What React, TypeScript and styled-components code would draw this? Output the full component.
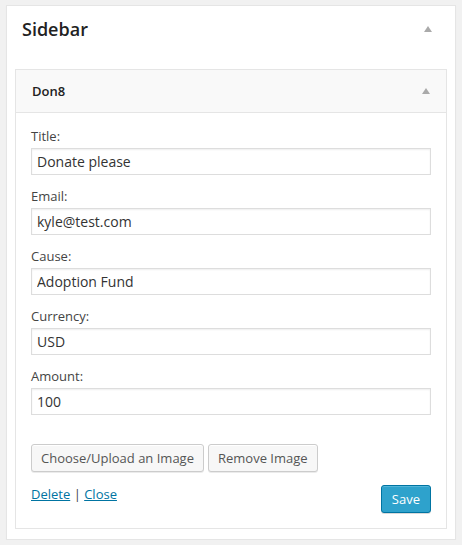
import React from "react";
import styled, { createGlobalStyle } from "styled-components";

const Global = createGlobalStyle`
  html, body { margin: 0; padding: 0; background: #f1f1f1; }
  body { font-family: "Open Sans", "Liberation Sans", sans-serif; font-size: 13px; color: #444; }
  #root { padding: 5px 0 0 6px; }
`;

const Panel = styled.div`
  box-sizing: border-box;
  width: 450px;
  background: #fff;
  border: 1px solid #e5e5e5;
  box-shadow: 0 1px 1px rgba(0, 0, 0, 0.04);
  padding: 0 8px 10px;
`;

const PanelHeader = styled.div`
  display: flex;
  align-items: center;
  justify-content: space-between;
  height: 46px;
  padding: 0 15px 0 7px;
  margin-bottom: 17px;
`;

const PanelTitle = styled.h2`
  margin: 0;
  font-size: 18px;
  font-weight: 600;
  line-height: 24px;
  color: #222;
`;

const Arrow = styled.span<{ $top?: number }>`
  display: block;
  width: 0;
  height: 0;
  border-left: 4px solid transparent;
  border-right: 4px solid transparent;
  border-bottom: 6px solid #aaa;
  margin-top: ${(p) => p.$top ?? 0}px;
`;

const Widget = styled.div`
  border: 1px solid #e5e5e5;
  background: #fff;
`;

const WidgetTop = styled.div`
  display: flex;
  align-items: center;
  justify-content: space-between;
  height: 42px;
  padding: 0 16px 0 16px;
  background: #f9f9f9;
  border-bottom: 1px solid #e5e5e5;
`;

const WidgetTitle = styled.h4`
  margin: 0;
  font-size: 13px;
  font-weight: 600;
  color: #222;
  line-height: 18px;
`;

const WidgetInside = styled.div`
  padding: 14px 15px 15px;
`;

const Field = styled.div`
  margin-bottom: 12px;
`;

const Label = styled.label`
  display: block;
  font-size: 13px;
  line-height: 18px;
  color: #444;
  margin-bottom: 3px;
`;

const Input = styled.input`
  box-sizing: border-box;
  display: block;
  width: 400px;
  height: 27px;
  margin: 0;
  padding: 2px 5px;
  border: 1px solid #ddd;
  background: #fff;
  box-shadow: inset 0 1px 2px rgba(0, 0, 0, 0.07);
  font-family: "Open Sans", "Liberation Sans", sans-serif;
  font-size: 14px;
  color: #333;
  outline: none;
`;

const ButtonRow = styled.div`
  display: flex;
  gap: 4px;
  margin-top: 29px;
`;

const Button = styled.button<{ $primary?: boolean }>`
  box-sizing: border-box;
  height: 28px;
  padding: 0 ${(p) => (p.$primary ? 10 : 9)}px;
  border-radius: 3px;
  font-family: "Open Sans", "Liberation Sans", sans-serif;
  font-size: 13px;
  line-height: 26px;
  cursor: pointer;
  border: 1px solid ${(p) => (p.$primary ? "#0074a2" : "#ccc")};
  background: ${(p) => (p.$primary ? "#2ea2cc" : "#f7f7f7")};
  color: ${(p) => (p.$primary ? "#fff" : "#555")};
  box-shadow: ${(p) =>
    p.$primary
      ? "inset 0 1px 0 rgba(120, 200, 230, 0.5), 0 1px 0 rgba(0, 0, 0, 0.15)"
      : "inset 0 1px 0 #fff, 0 1px 0 rgba(0, 0, 0, 0.08)"};
`;

const Footer = styled.div`
  display: flex;
  justify-content: space-between;
  align-items: flex-start;
  margin-top: 13px;
`;

const Links = styled.div`
  font-size: 13px;
  line-height: 18px;
  color: #444;
`;

const Link = styled.a`
  color: #0074a2;
  text-decoration: underline;
`;

const fields = [
  { label: "Title:", value: "Donate please" },
  { label: "Email:", value: "kyle@test.com" },
  { label: "Cause:", value: "Adoption Fund" },
  { label: "Currency:", value: "USD" },
  { label: "Amount:", value: "100" },
];

export default function App() {
  return (
    <>
      <Global />
      <Panel>
        <PanelHeader>
          <PanelTitle>Sidebar</PanelTitle>
          <Arrow $top={-1} />
        </PanelHeader>
        <Widget>
          <WidgetTop>
            <WidgetTitle>Don8</WidgetTitle>
            <Arrow />
          </WidgetTop>
          <WidgetInside>
            {fields.map((f) => (
              <Field key={f.label}>
                <Label>{f.label}</Label>
                <Input defaultValue={f.value} />
              </Field>
            ))}
            <ButtonRow>
              <Button>Choose/Upload an Image</Button>
              <Button>Remove Image</Button>
            </ButtonRow>
            <Footer>
              <Links>
                <Link href="#">Delete</Link> | <Link href="#">Close</Link>
              </Links>
              <Button $primary>Save</Button>
            </Footer>
          </WidgetInside>
        </Widget>
      </Panel>
    </>
  );
}
